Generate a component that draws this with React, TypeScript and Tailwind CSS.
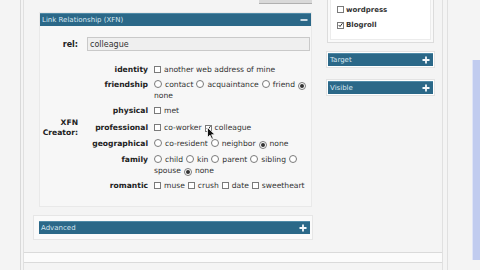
import type { ReactNode } from "react";

const Check = ({ on }: { on?: boolean }) => (
  <span className="inline-flex w-[7px] h-[7px] border border-[#7a7a7a] bg-white align-[-1px] items-center justify-center">
    {on && (
      <svg width="6" height="6" viewBox="0 0 6 6">
        <path d="M0.8 3 L2.4 4.8 L5.4 0.8" fill="none" stroke="#222" strokeWidth="1.1" />
      </svg>
    )}
  </span>
);

const Radio = ({ on }: { on?: boolean }) => (
  <span className="inline-flex w-[8px] h-[8px] rounded-full border border-[#7a7a7a] bg-white align-[-1px] items-center justify-center">
    {on && <span className="w-[4px] h-[4px] rounded-full bg-[#333]" />}
  </span>
);

const Opt = ({ kind, on, label }: { kind: "c" | "r"; on?: boolean; label?: string }) => (
  <span className="whitespace-nowrap mr-[3px]">
    {kind === "c" ? <Check on={on} /> : <Radio on={on} />}
    {label && <span className="ml-[3px]">{label}</span>}
  </span>
);

const Row = ({ label, children, h }: { label: string; children: ReactNode; h: string }) => (
  <div className={`flex items-start ${h}`}>
    <div className="w-[57px] shrink-0 text-right font-bold text-[#222] pt-[2px]">{label}</div>
    <div className="ml-[6px] w-[156px] pt-[2px] text-[#333]">{children}</div>
  </div>
);

const Bar = ({ title, sign, w }: { title: string; sign: "+" | "-"; w: string }) => (
  <div className={`${w} h-[13px] bg-[#2b6888] border-t border-[#4f8aa7] flex items-center justify-between pl-[2px] pr-[3px]`}>
    <span className="text-[7px] text-[#d6e7f1] leading-none">{title}</span>
    {sign === "+" ? (
      <svg width="8" height="8" viewBox="0 0 8 8">
        <path d="M4 0.5 V7.5 M0.5 4 H7.5" stroke="#f4f8fb" strokeWidth="1.8" />
      </svg>
    ) : (
      <svg width="8" height="8" viewBox="0 0 8 8">
        <path d="M0.5 4 H7.5" stroke="#f4f8fb" strokeWidth="1.6" />
      </svg>
    )}
  </div>
);

export default function App() {
  return (
    <div className="w-[480px] h-[270px] overflow-hidden bg-[#f4f4f4] flex font-['DejaVu_Sans',sans-serif] text-[7.6px] leading-[11px]">
      <div className="w-[21px] shrink-0 border-r border-[#d9d9d9]" />
      <div className="w-[2px] shrink-0" />
      <div className="w-[420px] shrink-0 border-l border-r border-[#e0e0e0] flex flex-col">
        <div className="flex pl-[15px] h-[240px]">
          {/* left column */}
          <div className="w-[273px] shrink-0 flex flex-col">
            <div className="flex justify-end">
              <div className="w-[53px] h-[4px] bg-[#d9d9d9] border-b border-[#b0b0b0]" />
            </div>
            <div className="mt-[8px] border border-[#e9e9e9] bg-[#f7f7f7] w-[273px] h-[195px]">
              <Bar title="Link Relationship (XFN)" sign="-" w="w-[271px]" />
              <div className="flex items-center mt-[11px]">
                <div className="w-[38px] text-right font-bold text-[#222] text-[8px]">rel:</div>
                <div className="ml-[9px] w-[223px] h-[14px] bg-[#efefef] border border-[#c9c9c9] flex items-center px-[2px] text-[8px] text-[#333]">
                  colleague
                </div>
              </div>
              <div className="flex mt-[11px]">
                <div className="w-[38px] shrink-0 text-right font-bold text-[#222] self-center leading-[10px]">
                  XFN
                  <br />
                  Creator:
                </div>
                <div className="ml-[13px] relative">
                  <Row label="identity" h="h-[15px]">
                    <Opt kind="c" label="another web address of mine" />
                  </Row>
                  <Row label="friendship" h="h-[26px]">
                    <Opt kind="r" label="contact" />
                    <Opt kind="r" label="acquaintance" />
                    <Opt kind="r" label="friend" />
                    <Opt kind="r" on />
                    <br />
                    <span>none</span>
                  </Row>
                  <Row label="physical" h="h-[17px]">
                    <Opt kind="c" label="met" />
                  </Row>
                  <Row label="professional" h="h-[16px]">
                    <Opt kind="c" label="co-worker" />
                    <Opt kind="c" on label="colleague" />
                  </Row>
                  <Row label="geographical" h="h-[16px]">
                    <Opt kind="r" label="co-resident" />
                    <Opt kind="r" label="neighbor" />
                    <Opt kind="r" on label="none" />
                  </Row>
                  <Row label="family" h="h-[26px]">
                    <Opt kind="r" label="child" />
                    <Opt kind="r" label="kin" />
                    <Opt kind="r" label="parent" />
                    <Opt kind="r" label="sibling" />
                    <Opt kind="r" />
                    <br />
                    <span className="mr-[3px]">spouse</span>
                    <Opt kind="r" on label="none" />
                  </Row>
                  <Row label="romantic" h="h-[15px]">
                    <Opt kind="c" label="muse" />
                    <Opt kind="c" label="crush" />
                    <Opt kind="c" label="date" />
                    <Opt kind="c" label="sweetheart" />
                  </Row>
                  <svg
                    className="absolute left-[116px] top-[65px]"
                    width="9"
                    height="13"
                    viewBox="0 0 9 13"
                  >
                    <path
                      d="M0.5 0.5 V10.5 L3 8.2 L4.8 12.2 L6.3 11.5 L4.6 7.7 L8 7.7 Z"
                      fill="#111"
                      stroke="#fff"
                      strokeWidth="0.8"
                    />
                  </svg>
                </div>
              </div>
            </div>
            <div className="mt-[8px] -ml-[6px] w-[280px] border border-[#e6e6e6] bg-[#fafafa] pl-[5px] py-[5px]">
              <Bar title="Advanced" sign="+" w="w-[271px]" />
            </div>
          </div>
          {/* right column */}
          <div className="ml-[15px] w-[107px] shrink-0 flex flex-col">
            <div className="h-[43px] border border-t-0 border-[#dcdcdc] bg-[#f9f9f9] p-[2px] pt-0">
              <div className="h-full border border-t-0 border-[#ececec] bg-white pl-[6px] pt-[3px] text-[7px] font-bold text-[#333] leading-[15px]">
                <div>
                  <Check />
                  <span className="ml-[2px]">wordpress</span>
                </div>
                <div>
                  <Check on />
                  <span className="ml-[2px]">Blogroll</span>
                </div>
              </div>
            </div>
            <div className="mt-[8px] border border-[#e3e3e3] bg-white p-px w-[109px] -ml-px">
              <Bar title="Target" sign="+" w="w-[105px]" />
            </div>
            <div className="mt-[11px] border border-[#e3e3e3] bg-white p-px w-[109px] -ml-px">
              <Bar title="Visible" sign="+" w="w-[105px]" />
            </div>
          </div>
        </div>
        <div className="mt-[12px] h-[11px] border-t border-b border-[#dadada] bg-[#fbfbfb]" />
      </div>
      <div className="w-[5px] shrink-0 border-r border-[#e0e0e0]" />
      <div className="flex-1 flex justify-end pt-[60px]">
        <div className="w-[8px] h-[200px] bg-[#c1ccef] border-l border-[#dfe5f7]" />
      </div>
    </div>
  );
}
